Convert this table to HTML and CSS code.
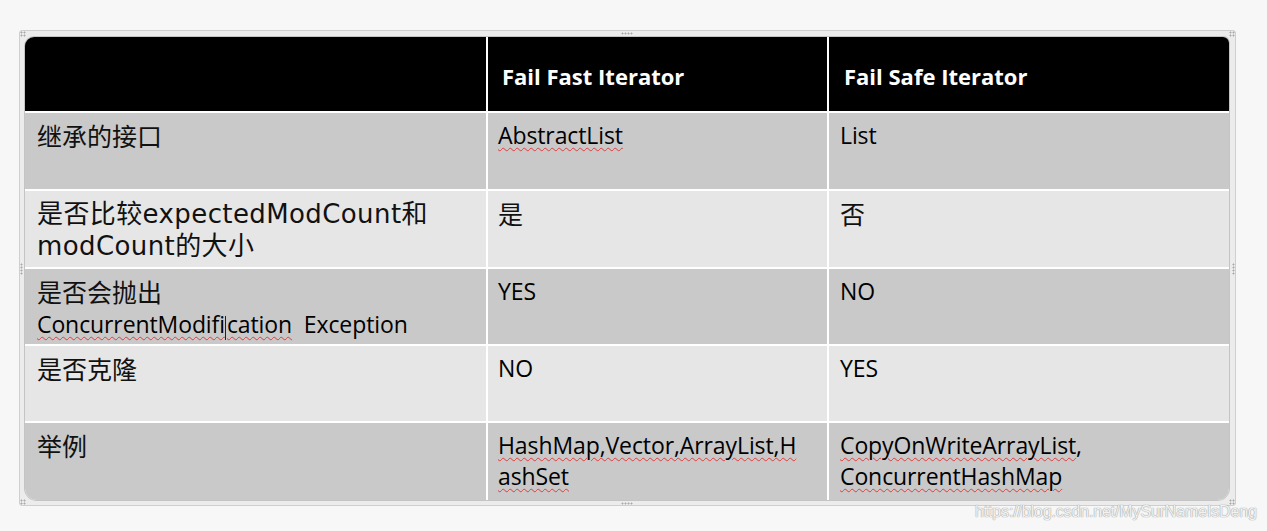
FILE: index.html
```html
<!DOCTYPE html>
<html lang="zh">
<head>
<meta charset="utf-8">
<title>Fail Fast vs Fail Safe</title>
<link rel="stylesheet" href="styles.css">
</head>
<body>
<div class="frame">
  <span class="handle h-top"></span>
  <span class="handle h-bottom"></span>
  <span class="handle h-left"></span>
  <span class="handle h-right"></span>
  <span class="handle c-tl"></span>
  <span class="handle c-tr"></span>
  <span class="handle c-bl"></span>
  <span class="handle c-br"></span>
  <div class="table">
    <div class="cell head"></div>
    <div class="cell head">Fail Fast Iterator</div>
    <div class="cell head">Fail Safe Iterator</div>

    <div class="cell dark cn">继承的接口</div>
    <div class="cell dark"><span class="spell">AbstractList</span></div>
    <div class="cell dark">List</div>

    <div class="cell light cn mix">是否比较expectedModCount和<br>modCount的大小</div>
    <div class="cell light cn">是</div>
    <div class="cell light cn">否</div>

    <div class="cell dark"><span class="cn">是否会抛出</span><br><span class="spell">ConcurrentModifi<span class="caret"></span>cation</span>&nbsp; Exception</div>
    <div class="cell dark">YES</div>
    <div class="cell dark">NO</div>

    <div class="cell light cn">是否克隆</div>
    <div class="cell light">NO</div>
    <div class="cell light">YES</div>

    <div class="cell dark cn">举例</div>
    <div class="cell dark"><span class="spell">HashMap,Vector,ArrayList,H</span><br><span class="spell">ashSet</span></div>
    <div class="cell dark"><span class="spell">CopyOnWriteArrayList</span>,<br><span class="spell">ConcurrentHashMap</span></div>
  </div>
</div>
<div class="watermark">https://blog.csdn.net/MySurNameIsDeng</div>
</body>
</html>
```

FILE: styles.css
```css
html, body {
  margin: 0;
  padding: 0;
}
body {
  width: 1267px;
  height: 531px;
  background: #f7f7f7;
  padding: 30px 0 0 19px;
  box-sizing: border-box;
  position: relative;
  overflow: hidden;
  font-family: "Open Sans", "Noto Sans CJK SC", sans-serif;
}
.frame {
  position: relative;
  width: 1217px;
  height: 476px;
  box-sizing: border-box;
  border: 1px solid #cfcfcf;
  border-radius: 3px;
  background: #ececec;
  padding: 6px 6px 5px 5px;
}
.table {
  display: grid;
  grid-template-columns: 461px 339px 400px;
  grid-template-rows: 74px 76px 76px 75px 75px 77px;
  gap: 2px;
  background: #ffffff;
  width: 1204px;
  border-radius: 9px 6px 12px 12px;
  overflow: hidden;
  box-shadow: 0 0 0 1px #c4c4c4;
}
.cell {
  font-size: 23px;
  line-height: 31px;
  color: #000;
  padding: 7px 10px 0 10px;
  box-sizing: border-box;
  white-space: nowrap;
  letter-spacing: -0.1px;
}
.cell:nth-child(3n+1) {
  padding-left: 12px;
}
.cell:nth-child(3n) {
  padding-left: 11px;
}
.head {
  background: #000;
  color: #fff;
  font-weight: 700;
  font-size: 22px;
  letter-spacing: 0;
  display: flex;
  align-items: center;
  padding-top: 5px;
  padding-left: 14px;
}
.head:nth-child(3) {
  padding-left: 15px;
}
.dark {
  background: #c9c9c9;
}
.light {
  background: #e6e6e6;
}
.cn {
  font-family: "Noto Sans CJK SC", sans-serif;
  font-size: 25px;
  font-weight: 400;
  color: #111;
  letter-spacing: 0;
}
.mix {
  font-family: "DejaVu Sans", "Noto Sans CJK SC", sans-serif;
  font-size: 26px;
  line-height: 32px;
  letter-spacing: 0.4px;
}
.spell {
  text-decoration: underline wavy #e23b3b;
  text-decoration-thickness: 1px;
  text-underline-offset: 3px;
}
.caret {
  display: inline-block;
  width: 0;
  height: 24px;
  border-left: 1px solid #222;
  vertical-align: -7px;
  margin: 0 0.5px;
}
.handle {
  position: absolute;
  width: 12px;
  height: 3px;
  background-image: radial-gradient(circle, #a8a8a8 0.8px, transparent 1.2px);
  background-size: 3px 3px;
}
.h-top { top: 1px; left: 601px; }
.h-bottom { bottom: 0; left: 601px; }
.h-left { left: 0; top: 232px; width: 3px; height: 12px; }
.h-right { right: 0; top: 232px; width: 3px; height: 12px; }
.c-tl { top: 0; left: 0; width: 6px; height: 6px; }
.c-tr { top: 0; right: 0; width: 6px; height: 6px; }
.c-bl { bottom: 0; left: 0; width: 6px; height: 6px; }
.c-br { bottom: 0; right: 0; width: 6px; height: 6px; }
.watermark {
  position: absolute;
  left: 975px;
  top: 503px;
  font-family: "Liberation Sans", Arial, sans-serif;
  font-size: 16px;
  letter-spacing: -0.15px;
  color: #f2f2f2;
  text-shadow: 0 0 1px #9a9a9a, 0 0 1px #9a9a9a;
}
```
